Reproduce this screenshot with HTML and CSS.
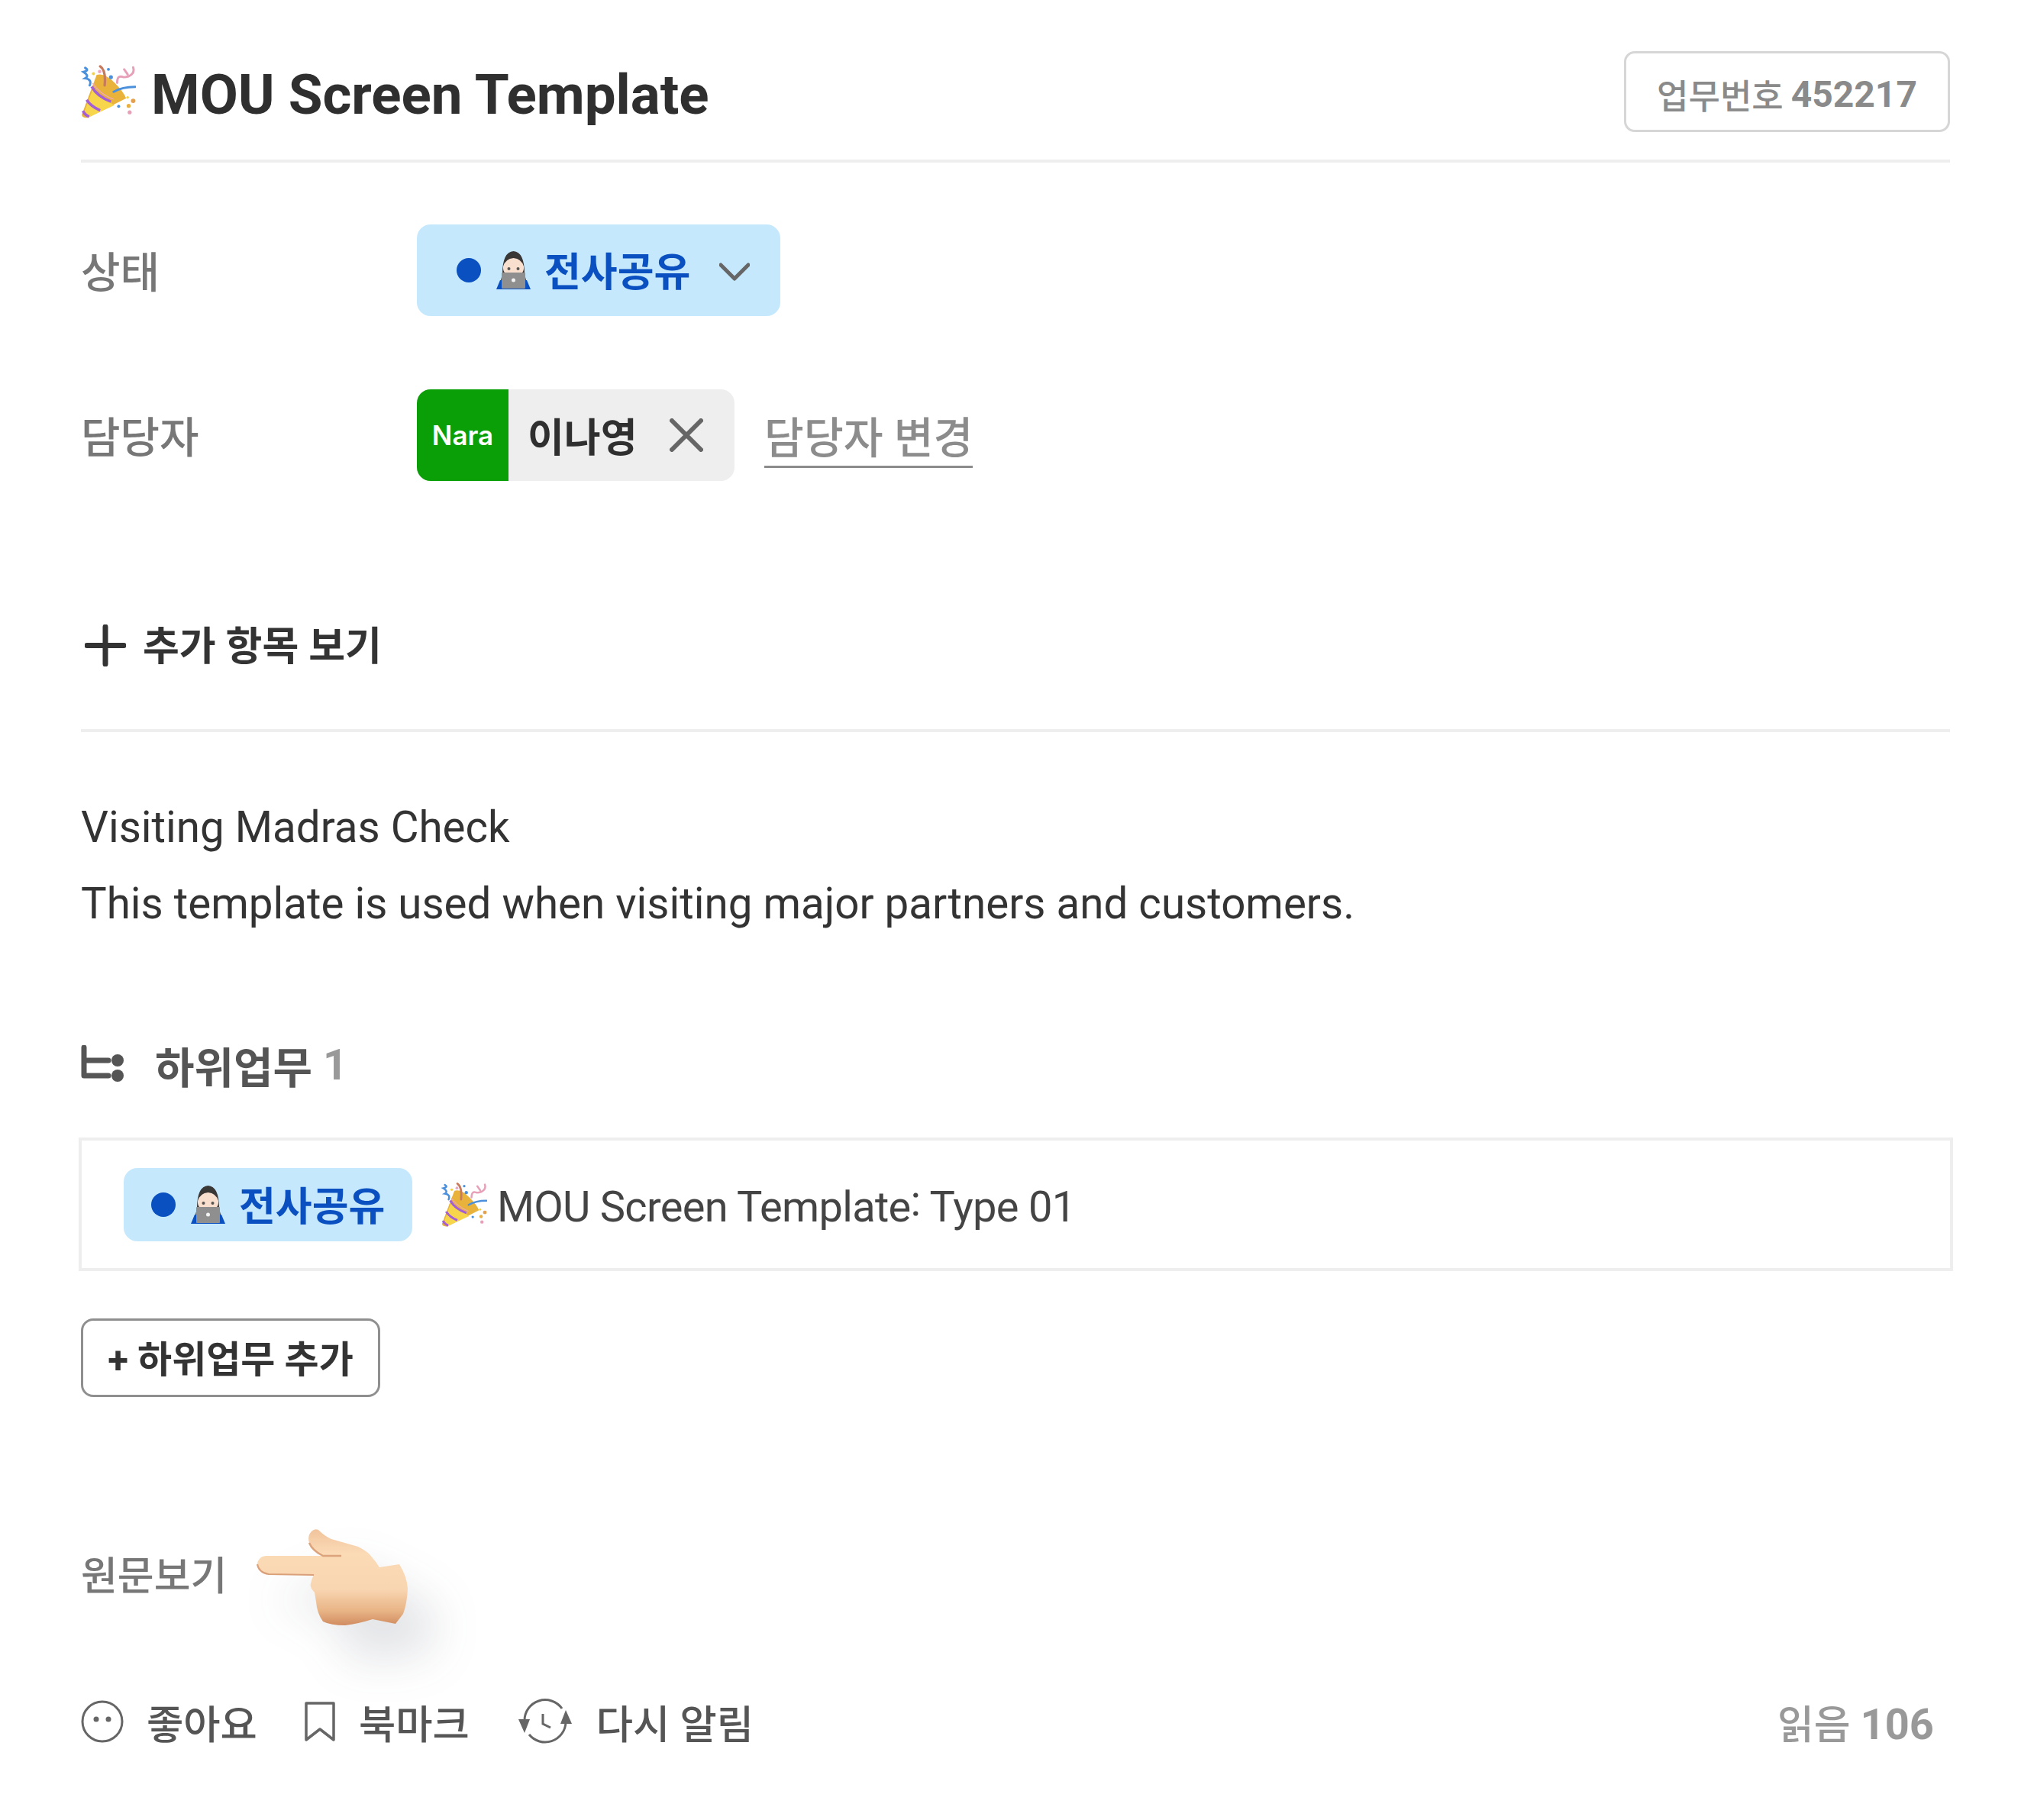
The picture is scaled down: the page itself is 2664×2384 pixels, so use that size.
FILE: index.html
```html
<!DOCTYPE html>
<html lang="ko">
<head>
<meta charset="utf-8">
<title>MOU Screen Template</title>
<link rel="stylesheet" href="styles.css">
</head>
<body>
<svg class="defs" aria-hidden="true">
  <symbol id="popper" viewBox="45 80 220 210">
    <path d="M48 278 L108 118 Q140 108 180 150 Q215 185 226 212 L72 290 Q50 290 48 278Z" fill="#e9b23a"/>
    <path d="M60 262 L92 176 L178 240 L80 286Z" fill="#f7d64c"/>
    <path d="M88 165 Q110 205 165 225 M68 218 Q85 245 122 260 M53 262 Q60 278 78 285" fill="none" stroke="#a45fd6" stroke-width="11"/>
    <path d="M92 152 Q120 195 175 216" fill="none" stroke="#efa6c0" stroke-width="4"/>
    <path d="M122 84 Q146 100 140 160" fill="none" stroke="#c87a5c" stroke-width="10" stroke-linecap="round"/>
    <path d="M62 90 Q80 100 55 106 Q80 122 62 132 Q90 136 80 160" fill="none" stroke="#4a90dc" stroke-width="9" stroke-linecap="round"/>
    <path d="M218 96 L232 116 M254 88 Q262 112 236 124 Q214 130 212 126 Q190 118 190 150" fill="none" stroke="#e7a0b8" stroke-width="9" stroke-linecap="round"/>
    <path d="M176 186 Q210 166 262 166" fill="none" stroke="#4a90dc" stroke-width="9" stroke-linecap="round"/>
    <circle cx="165" cy="127" r="8" fill="#4a90dc"/><circle cx="155" cy="96" r="6" fill="#4a90dc"/><circle cx="95" cy="113" r="6" fill="#f5d040"/><circle cx="120" cy="105" r="7" fill="#efa6c0"/>
    <circle cx="254" cy="222" r="9" fill="#e2a050"/><circle cx="236" cy="242" r="8" fill="#e8b040"/><circle cx="196" cy="244" r="6" fill="#4a90dc"/><circle cx="240" cy="268" r="8" fill="#e7a0b8"/><circle cx="232" cy="208" r="5" fill="#f5d040"/>
  </symbol>
  <symbol id="coder" viewBox="0 0 45 50">
    <path d="M0 50 L5 38 H40 L45 50Z" fill="#0a50c0"/>
    <path d="M8 30 Q8 1 22.500 0 Q37 1 37 30 L39 38 H6Z" fill="#3a3737"/>
    <path d="M9 20 Q12 10 22.500 9 Q33 10 36 20 Q37 32 22.500 33 Q8 32 9 20Z" fill="#f9dfcd"/>
    <circle cx="16.500" cy="23" r="2" fill="#555"/><circle cx="28.500" cy="23" r="2" fill="#555"/>
    <rect x="7" y="28" width="31" height="21" rx="1" fill="#8f8f8f"/>
    <circle cx="22.500" cy="38" r="2.500" fill="#f2f2f2"/>
  </symbol>
</svg>

<main class="page">
  <header class="head">
    <h1 class="title"><svg class="emoji-title"><use href="#popper"/></svg><span class="title-text">MOU Screen Template</span></h1>
    <div class="ticket">업무번호 <b>452217</b></div>
  </header>

  <div class="field field-status">
    <div class="label">상태</div>
    <div class="status-pill status-large">
      <span class="dot"></span>
      <svg class="coder"><use href="#coder"/></svg>
      <span class="status-text">전사공유</span>
      <svg class="chevron" viewBox="0 0 40 24"><path d="M2 3 L20 21 L38 3" fill="none" stroke="#666" stroke-width="5" stroke-linecap="round" stroke-linejoin="round"/></svg>
    </div>
  </div>

  <div class="field field-owner">
    <div class="label">담당자</div>
    <div class="chip">
      <span class="chip-org">Nara</span>
      <span class="chip-name">이나영</span>
      <svg class="chip-x" viewBox="0 0 44 44"><path d="M3 3 L41 41 M41 3 L3 41" stroke="#666" stroke-width="6" stroke-linecap="round"/></svg>
    </div>
    <a class="change">담당자 변경</a>
  </div>

  <div class="more">
    <svg class="more-plus" viewBox="0 0 54 55"><path d="M3 27.500 H51 M27 3 V52" stroke="#333" stroke-width="7" stroke-linecap="round"/></svg>
    <span class="more-text">추가 항목 보기</span>
  </div>

  <section class="body-text">
    <p>Visiting Madras Check</p>
    <p>This template is used when visiting major partners and customers.</p>
  </section>

  <div class="sub-head">
    <svg class="sub-icon" viewBox="0 0 56 52"><path d="M4 3 V40 H36 M4 20 H36" fill="none" stroke="#555" stroke-width="7" stroke-linecap="round" stroke-linejoin="round"/><circle cx="48" cy="20" r="8" fill="#555"/><circle cx="48" cy="40" r="8" fill="#555"/></svg>
    <span class="sub-title">하위업무</span>
    <span class="sub-count">1</span>
  </div>

  <div class="sub-box">
    <div class="status-pill status-small">
      <span class="dot"></span>
      <svg class="coder"><use href="#coder"/></svg>
      <span class="status-text">전사공유</span>
    </div>
    <svg class="emoji-row"><use href="#popper"/></svg>
    <span class="sub-name">MOU Screen Template<span class="raised">:</span> Type 01</span>
  </div>

  <button class="add-btn">+ 하위업무 추가</button>

  <div class="origin">
    <span class="origin-text">원문보기</span>
    <svg class="hand" viewBox="0 0 197 126">
      <defs>
        <linearGradient id="skin" x1="0" y1="0" x2="0" y2="1">
          <stop offset="0" stop-color="#f1c49c"/><stop offset=".25" stop-color="#fbdab6"/><stop offset=".62" stop-color="#f9d6b2"/><stop offset=".85" stop-color="#e8b486"/><stop offset="1" stop-color="#d08c60"/>
        </linearGradient>
      </defs>
      <path d="M0 46 Q1 36 11 35 L86 35 Q72 28 68 18 Q65 8 72 2 Q76 -1 80 1 Q88 9 97 13 L132 23 Q142 28 147 33 Q155 42 160 50 L186 46 Q196 62 197 78 Q196 98 191 111 L181 124 L151 118 Q132 124 115 126 Q96 126 86 121 Q78 110 77 95 L75 83 Q68 76 70 71 Q71 65 74 60 L15 59 Q2 57 0 46Z" fill="url(#skin)"/>
      <path d="M0 46 Q2 57 15 59 L74 60" fill="none" stroke="#d9a07a" stroke-width="2"/>
      <path d="M68 18 Q72 28 86 35 L110 35" fill="none" stroke="#dca47c" stroke-width="2.500"/>
    </svg>
  </div>

  <footer class="foot">
    <div class="actions">
      <div class="action action-like">
        <svg class="i-like" viewBox="0 0 56 56"><circle cx="28" cy="28" r="26" fill="none" stroke="#666" stroke-width="3"/><circle cx="20" cy="25" r="3.500" fill="#666"/><circle cx="36" cy="25" r="3.500" fill="#666"/></svg>
        <span>좋아요</span>
      </div>
      <div class="action action-mark">
        <svg class="i-mark" viewBox="0 0 40 52"><path d="M2 2 H38 V50 L20 36 L2 50Z" fill="none" stroke="#666" stroke-width="3.500" stroke-linejoin="round"/></svg>
        <span>북마크</span>
      </div>
      <div class="action action-remind">
        <svg class="i-remind" viewBox="0 0 70 62"><path d="M8 30 A27 27 0 0 1 57 14 M62 32 A27 27 0 0 1 14 48" fill="none" stroke="#666" stroke-width="3"/><path d="M0 28 H15 L8 46Z M55 34 H70 L62 16Z" fill="#666"/><path d="M32 21 V34 L42 39" fill="none" stroke="#666" stroke-width="3"/></svg>
        <span>다시 알림</span>
      </div>
    </div>
    <div class="reads">읽음 <b>106</b></div>
  </footer>
</main>
</body>
</html>
```

FILE: styles.css
```css
* { box-sizing: border-box; }
html, body { margin: 0; padding: 0; background: #fff; }
body {
  font-family: Roboto, "Noto Sans CJK KR", sans-serif;
  color: #333;
  height: 2384px;
  overflow: hidden;
}
.defs { display: none; }
.page { padding: 67px 110px 0 106px; }

.head {
  display: flex;
  justify-content: space-between;
  align-items: center;
  padding-bottom: 36px;
  border-bottom: 4px solid #eee;
}
.title {
  display: flex;
  align-items: center;
  margin: 0;
  font-size: 72.700px;
  font-weight: 700;
  color: #2f2f2f;
}
.title-text { line-height: 96px; padding-top: 10px; }
.emoji-title { width: 72px; height: 70px; margin-right: 20px; }
.ticket {
  height: 106px;
  width: 427px;
  padding-top: 6px;
  display: flex;
  align-items: center;
  justify-content: center;
  gap: 10px;
  border: 3px solid #d6d6d6;
  border-radius: 14px;
  font-size: 45px;
  font-weight: 500;
  color: #8a8a8a;
}
.ticket b { font-size: 48px; font-weight: 700; }

.field { display: flex; align-items: center; }
.field-status { margin-top: 81px; }
.field-owner { margin-top: 96px; }
.label { width: 440px; font-size: 56px; font-weight: 500; color: #777; padding-bottom: 4px; }

.status-pill {
  display: flex;
  align-items: center;
  background: #c5e8fd;
  border-radius: 18px;
  color: #0a50c0;
  font-weight: 700;
}
.status-large { width: 476px; height: 120px; padding-left: 52px; }
.status-small { width: 378px; height: 96px; padding-left: 36px; }
.dot { width: 32px; height: 32px; border-radius: 50%; background: #0a50c0; flex: none; }
.coder { width: 45px; height: 50px; margin-left: 20px; flex: none; }
.status-text { font-size: 52px; margin-left: 18px; line-height: 1; padding-top: 8px; }
.chevron { width: 40px; height: 24px; margin-left: 38px; margin-top: 4px; }

.chip {
  display: flex;
  align-items: center;
  width: 416px;
  height: 120px;
  background: #eee;
  border-radius: 18px;
  overflow: hidden;
}
.chip-org {
  width: 120px;
  height: 120px;
  display: flex;
  align-items: center;
  justify-content: center;
  background: #0a9f06;
  color: #fff;
  font-family: Inter, sans-serif;
  font-weight: 600;
  font-size: 35px;
}
.chip-name { margin-left: 25px; font-size: 52px; font-weight: 700; color: #2f2f2f; line-height: 1; padding-top: 10px; }
.chip-x { width: 44px; height: 44px; margin-left: 42px; }
.change {
  margin: 12px 0 0 39px;
  font-size: 56.400px;
  font-weight: 500;
  line-height: 70px;
  color: #8c8c8c;
  border-bottom: 3px solid #8c8c8c;
}

.more {
  display: flex;
  align-items: center;
  margin-top: 187px;
  padding: 0 0 82px 5px;
  border-bottom: 4px solid #eee;
  font-size: 52px;
  font-weight: 700;
  color: #333;
}
.more-text { line-height: 50px; padding-top: 6px; }
.more-plus { width: 54px; height: 55px; margin-right: 22px; }

.body-text { margin-top: 75px; font-size: 56.500px; line-height: 100px; color: #333; }
.body-text p { margin: 0; }

.sub-head {
  display: flex;
  align-items: center;
  margin-top: 135px;
  height: 52px;
  color: #555;
  font-weight: 700;
}
.sub-icon { width: 56px; height: 52px; }
.sub-title { margin-left: 41px; font-size: 56px; padding-bottom: 2px; }
.sub-count { margin-left: 14px; font-size: 56px; color: #999; }

.sub-box {
  display: flex;
  align-items: center;
  margin: 69px -4px 0 -3px;
  height: 175px;
  padding-left: 55px;
  border: 4px solid #eee;
}
.emoji-row { width: 60px; height: 60px; margin-left: 38px; flex: none; }
.sub-name { margin-left: 13px; padding-top: 6px; font-size: 56px; letter-spacing: -0.7px; color: #444; }
.raised { vertical-align: 8px; line-height: 0; }

.add-btn {
  display: block;
  margin: 62px 0 0 0;
  width: 392px;
  height: 103px;
  padding: 0 0 4px;
  background: #fff;
  border: 3px solid #8f8f8f;
  border-radius: 16px;
  font-family: inherit;
  font-size: 49px;
  font-weight: 700;
  color: #333;
}

.origin { display: flex; align-items: center; margin-top: 173px; height: 126px; }
.origin-text { font-size: 52px; font-weight: 500; color: #777; padding-bottom: 12px; }
.hand {
  width: 197px;
  height: 126px;
  margin-left: 40px;
  overflow: visible;
  filter: drop-shadow(35px 45px 30px rgba(60, 70, 90, .15));
}

.foot {
  display: flex;
  align-items: center;
  justify-content: space-between;
  margin-top: 95px;
  height: 62px;
  padding-right: 21px;
}
.actions { display: flex; align-items: center; }
.action { display: flex; align-items: center; font-size: 52.500px; font-weight: 500; color: #555; }
.action-mark { margin-left: 62px; }
.action-remind { margin-left: 64px; }
.i-like { width: 56px; height: 56px; margin-right: 30px; }
.i-mark { width: 40px; height: 52px; margin-right: 31px; }
.i-remind { width: 70px; height: 62px; margin-right: 32px; }
.reads { font-size: 52px; font-weight: 500; color: #999; }
.reads b { font-size: 56px; font-weight: 700; }
```
